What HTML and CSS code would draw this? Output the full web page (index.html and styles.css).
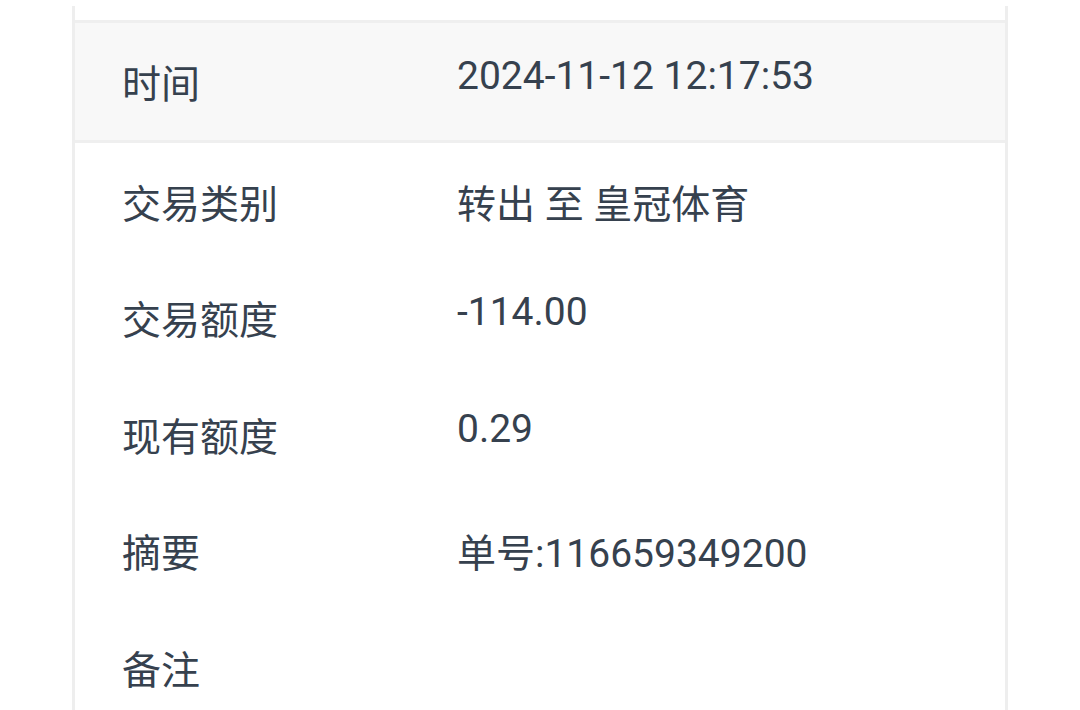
FILE: index.html
```html
<!DOCTYPE html>
<html lang="zh-CN">
<head>
<meta charset="utf-8">
<link rel="stylesheet" href="styles.css">
</head>
<body>
<div class="card">
  <div class="row row-head">
    <div class="label">时间</div>
    <div class="value">2024-11-12 12:17:53</div>
  </div>
  <div class="row">
    <div class="label">交易类别</div>
    <div class="value">转出 至 皇冠体育</div>
  </div>
  <div class="row">
    <div class="label">交易额度</div>
    <div class="value">-114.00</div>
  </div>
  <div class="row">
    <div class="label">现有额度</div>
    <div class="value">0.29</div>
  </div>
  <div class="row">
    <div class="label">摘要</div>
    <div class="value">单号:116659349200</div>
  </div>
  <div class="row">
    <div class="label">备注</div>
    <div class="value"></div>
  </div>
</div>
</body>
</html>
```

FILE: styles.css
```css
html, body {
  margin: 0;
  padding: 0;
  background: #ffffff;
  height: 710px;
  overflow: hidden;
}

body {
  font-family: Roboto, "Noto Sans CJK SC", sans-serif;
  font-size: 39px;
  color: #36414e;
}

.card {
  margin: 6px 0 0 72px;
  width: 936px;
  height: 704px;
  overflow: hidden;
  border-left: 3px solid #eeeeee;
  border-right: 3px solid #eeeeee;
  padding-top: 14px;
  box-sizing: border-box;
}

.row {
  display: grid;
  grid-template-columns: 382px 1fr;
  align-items: start;
  padding: 30px 0 30.5px;
}

.row-head {
  background: #f8f8f8;
  border-top: 3px solid #efefef;
  border-bottom: 3px solid #efefef;
}

.label {
  padding-left: 47px;
  line-height: normal;
}

.value {
  line-height: normal;
  white-space: nowrap;
}
```
